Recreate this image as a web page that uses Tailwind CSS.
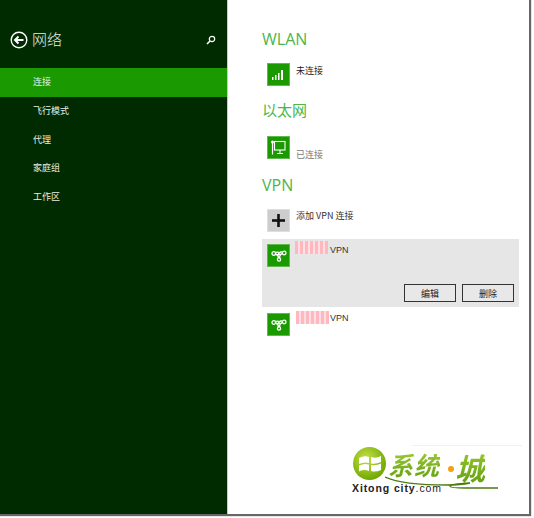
<!DOCTYPE html>
<html><head><meta charset="utf-8"><script src="https://cdn.jsdelivr.net/npm/@tailwindcss/browser@4"></script></head>
<body class="bg-white">
<div class="relative flex w-[534px] h-[518px] overflow-hidden bg-white font-['Liberation_Sans','Noto_Sans_CJK_SC',sans-serif]">
  <div class="w-[529px] h-[514px] flex shadow-[1px_1px_1px_1px_#666]">
    <aside class="w-[228px] shrink-0 bg-[#002b00] border-r border-[#c4ccc4] flex flex-col text-white">
      <div class="h-[68px] flex items-start pt-[30px] pl-[10px] pr-[11px]">
        <svg width="18" height="18" viewBox="0 0 18 18" fill="none" stroke="white" class="mt-[1px]"><circle cx="9" cy="9" r="7.800" stroke-width="1.400"/><path d="M13.500 9H5M8.500 5.500L5 9l3.500 3.500" stroke-width="2"/></svg>
        <span class="ml-[4px] text-[15px] leading-[18px] font-['Noto_Sans_CJK_SC',sans-serif] font-light text-[#e6efe6]">网络</span>
        <svg width="10" height="10" viewBox="0 0 10 10" fill="none" stroke="white" class="ml-auto mt-[5px]"><circle cx="6" cy="4" r="2.700" stroke-width="1.200"/><path d="M4 6L1 9" stroke-width="1.600"/></svg>
      </div>
      <nav class="flex flex-col text-[9px] leading-[28.500px] text-[#e6efe6]">
        <div class="h-[29px] bg-[#1a9a00] pl-[33px] font-['Noto_Sans_CJK_SC',sans-serif]">连接</div>
        <div class="h-[28.500px] pl-[33px] font-['Noto_Sans_CJK_SC',sans-serif]">飞行模式</div>
        <div class="h-[28.500px] pl-[33px] font-['Noto_Sans_CJK_SC',sans-serif]">代理</div>
        <div class="h-[28.500px] pl-[33px] font-['Noto_Sans_CJK_SC',sans-serif]">家庭组</div>
        <div class="h-[28.500px] pl-[33px] font-['Noto_Sans_CJK_SC',sans-serif]">工作区</div>
      </nav>
    </aside>
    <main class="flex-1 relative pt-[30px] pl-[34px]">
      <h2 class="text-[16px] leading-[18px] text-[#4cb648] font-normal font-['Open_Sans',sans-serif]">WLAN</h2>
      <div class="flex mt-[15px] ml-[5px] h-[24px]">
        <div class="w-[23px] h-[23px] bg-[#1a9a00] border border-[#60b850] flex items-center justify-center">
          <svg width="13" height="11" viewBox="0 0 13 11" fill="white"><rect x="0" y="8" width="1.500" height="3"/><rect x="3" y="6" width="1.500" height="5"/><rect x="6" y="4" width="1.500" height="7"/><rect x="9" y="1" width="2" height="10"/></svg>
        </div>
        <span class="ml-[6px] text-[9px] leading-[12px] mt-[2px] text-[#222] font-['Noto_Sans_CJK_SC',sans-serif]">未连接</span>
      </div>
      <h2 class="mt-[12px] text-[15px] leading-[21px] text-[#4cb648] font-normal font-['Noto_Sans_CJK_SC',sans-serif]">以太网</h2>
      <div class="flex mt-[16px] ml-[5px] h-[24px]">
        <div class="w-[23px] h-[23px] bg-[#1a9a00] border border-[#60b850] flex items-center justify-center">
          <svg width="15" height="15" viewBox="0 0 15 15" fill="none" stroke="white" stroke-width="1.100"><rect x="3.500" y="1.500" width="10.500" height="8.500"/><path d="M9 10v3M6 13.500h6"/><path d="M1.500 3v11.500" stroke-width="1.200"/><circle cx="1.500" cy="2" r="1.500" fill="white" stroke="none"/></svg>
        </div>
        <span class="ml-[6px] mt-[12px] text-[9px] leading-[13px] text-[#777] font-['Noto_Sans_CJK_SC',sans-serif]">已连接</span>
      </div>
      <h2 class="mt-[16px] text-[16px] leading-[18px] text-[#4cb648] font-normal font-['Open_Sans',sans-serif]">VPN</h2>
      <div class="flex mt-[15px] ml-[5px] h-[23px]">
        <div class="w-[23px] h-[23px] bg-[#cdcdcd] border border-[#dedede] flex items-center justify-center">
          <svg width="13" height="13" viewBox="0 0 13 13" fill="#111"><rect x="5.200" y="0" width="2.600" height="13"/><rect x="0" y="5.200" width="13" height="2.600"/></svg>
        </div>
        <span class="ml-[6px] mt-[0px] text-[9px] leading-[13px] text-[#333] font-['Noto_Sans_CJK_SC',sans-serif]">添加 VPN 连接</span>
      </div>
      <section class="mt-[7px] w-[257px] h-[68px] bg-[#e6e6e6] relative flex flex-col">
        <div class="flex pt-[5px] pl-[5px]">
          <div class="w-[23px] h-[23px] bg-[#1a9a00] border border-[#60b850] flex items-center justify-center">
            <svg width="16" height="12" viewBox="0 0 16 12" fill="none" stroke="white" stroke-width="1.300"><circle cx="2.800" cy="3.500" r="1.800"/><circle cx="13.200" cy="3" r="1.800"/><circle cx="8" cy="9.500" r="1.600"/><path d="M4.500 4C6.500 4.500 7.500 6 7.500 8M11.500 3.500C9.500 4 8.500 6 8.500 8M5 2.500Q8 1 8.500 5M11 2Q8 1.500 7 5"/></svg>
          </div>
          <div class="ml-[5px] flex items-start h-[14px] mt-[-3px]">
            <span class="w-[33px] h-[13px] bg-[repeating-linear-gradient(90deg,#ffb8c0_0_3px,#ffdfe3_3px_5px)]"></span>
            <span class="ml-[2px] mt-[3px] text-[9px] leading-[13px] text-[#333]">VPN</span>
          </div>
        </div>
        <div class="mt-auto mb-[5px] flex justify-end gap-[6px] pr-[5px]">
          <button class="w-[52px] h-[18px] border border-[#333] bg-[#e8e8e8] text-[9px] leading-[15px] text-[#222] font-['Noto_Sans_CJK_SC',sans-serif]">编辑</button>
          <button class="w-[52px] h-[18px] border border-[#333] bg-[#e8e8e8] text-[9px] leading-[15px] text-[#222] font-['Noto_Sans_CJK_SC',sans-serif]">删除</button>
        </div>
      </section>
      <div class="flex mt-[6px] ml-[5px]">
        <div class="w-[23px] h-[23px] bg-[#1a9a00] border border-[#60b850] flex items-center justify-center">
          <svg width="16" height="12" viewBox="0 0 16 12" fill="none" stroke="white" stroke-width="1.300"><circle cx="2.800" cy="3.500" r="1.800"/><circle cx="13.200" cy="3" r="1.800"/><circle cx="8" cy="9.500" r="1.600"/><path d="M4.500 4C6.500 4.500 7.500 6 7.500 8M11.500 3.500C9.500 4 8.500 6 8.500 8M5 2.500Q8 1 8.500 5M11 2Q8 1.500 7 5"/></svg>
        </div>
        <div class="ml-[6px] flex items-start h-[14px] mt-[-2px]">
          <span class="w-[33px] h-[13px] bg-[repeating-linear-gradient(90deg,#ffb8c0_0_3px,#ffdfe3_3px_5px)]"></span>
          <span class="ml-[1px] mt-[1px] text-[9px] leading-[13px] text-[#333]">VPN</span>
        </div>
      </div>
      <div class="absolute left-[124px] top-[444px] w-[175px] h-[50px]">
        <div class="absolute left-[60px] top-[1px] w-[110px] h-[1px] bg-[#e8f6ee]"></div>
        <div class="absolute left-[1px] top-[3px] w-[33px] h-[33px] rounded-full bg-[radial-gradient(circle_at_40%_35%,#c4e04a,#6fa800_75%)] flex items-center justify-center">
          <svg width="24" height="20" viewBox="0 0 24 20" fill="white"><path d="M1 4Q6 1 11 3V9Q6 7.500 1 10ZM13 3Q18 5 23 2V8Q18 10.500 13 9.500ZM1 11.500Q6 9 11 10.500V17Q6 15 1 17.500ZM13 11Q18 12 23 9.500V16Q18 18.500 13 17Z"/></svg>
        </div>
        <span class="absolute left-[36px] top-[2px] text-[25px] leading-[36px] font-bold italic tracking-[1px] bg-linear-to-b from-[#a8d43a] to-[#5f9c0c] bg-clip-text text-transparent font-['Noto_Sans_CJK_SC',sans-serif] whitespace-nowrap">系统</span>
        <div class="absolute left-[96px] top-[22px] w-[6px] h-[6px] rounded-full bg-[#f5a010]"></div>
        <span class="absolute left-[103px] top-[3px] text-[30px] leading-[40px] font-bold italic bg-linear-to-b from-[#9ccc30] to-[#5f9c0c] bg-clip-text text-transparent font-['Noto_Sans_CJK_SC',sans-serif]">城</span>
        <span class="absolute left-[0px] top-[38px] text-[10.500px] leading-[12px] font-bold text-[#222] tracking-[0.900px] whitespace-nowrap font-['Liberation_Sans',sans-serif]">Xitong city<span class="font-normal">.com</span></span>
        <svg class="absolute left-[33px] top-[30px]" width="115" height="16" viewBox="0 0 115 16" fill="none" stroke="#4c7a10"><path d="M0 3C15 10 40 11 62 11Q75 11 85 9Q65 10 65 12.500Q66 14 80 14H113" stroke-width="1.300"/></svg>
      </div>
    </main>
  </div>
</div>
</body></html>
